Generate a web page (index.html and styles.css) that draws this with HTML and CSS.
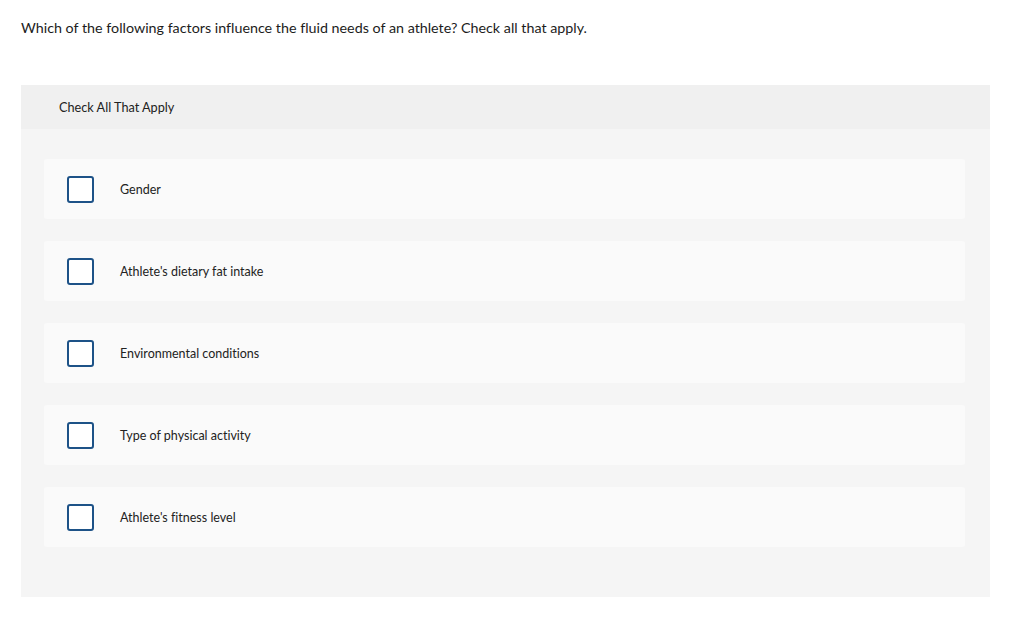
FILE: index.html
```html
<!DOCTYPE html>
<html lang="en">
<head>
<meta charset="utf-8">
<title>Check All That Apply</title>
<link rel="stylesheet" href="styles.css">
</head>
<body>
<div class="page">
  <p class="question">Which of the following factors influence the fluid needs of an athlete? Check all that apply.</p>
  <div class="panel">
    <div class="panel-head">Check All That Apply</div>
    <div class="panel-body">
      <label class="option"><span class="box"></span><span class="text">Gender</span></label>
      <label class="option"><span class="box"></span><span class="text">Athlete's dietary fat intake</span></label>
      <label class="option"><span class="box"></span><span class="text">Environmental conditions</span></label>
      <label class="option"><span class="box"></span><span class="text">Type of physical activity</span></label>
      <label class="option"><span class="box"></span><span class="text">Athlete's fitness level</span></label>
    </div>
  </div>
</div>
</body>
</html>
```

FILE: styles.css
```css
html, body {
  margin: 0;
  padding: 0;
  background: #ffffff;
}
body {
  font-family: "Lato", "Liberation Sans", sans-serif;
  font-variant-ligatures: none;
  color: #222222;
}
.page {
  padding: 20px 34px 0 21px;
}
.question {
  margin: 0;
  font-size: 14.3px;
  line-height: 16px;
  color: #1c1c1c;
}
.panel {
  margin-top: 49px;
  width: 969px;
  background: #f5f5f5;
}
.panel-head {
  height: 44px;
  background: #f0f0f0;
  padding-left: 38px;
  display: flex;
  align-items: center;
  font-size: 12.7px;
  color: #222;
}
.panel-body {
  padding: 30px 25px 50px 23px;
  display: flex;
  flex-direction: column;
  gap: 22px;
}
.option {
  height: 60px;
  background: #fafafa;
  border-radius: 3px;
  display: flex;
  align-items: center;
  padding-left: 23px;
}
.box {
  width: 23px;
  height: 23px;
  border: 2px solid #1d5287;
  border-radius: 3px;
  background: #fff;
  flex: none;
}
.text {
  margin-left: 26px;
  font-size: 12.5px;
  color: #222;
}
```
